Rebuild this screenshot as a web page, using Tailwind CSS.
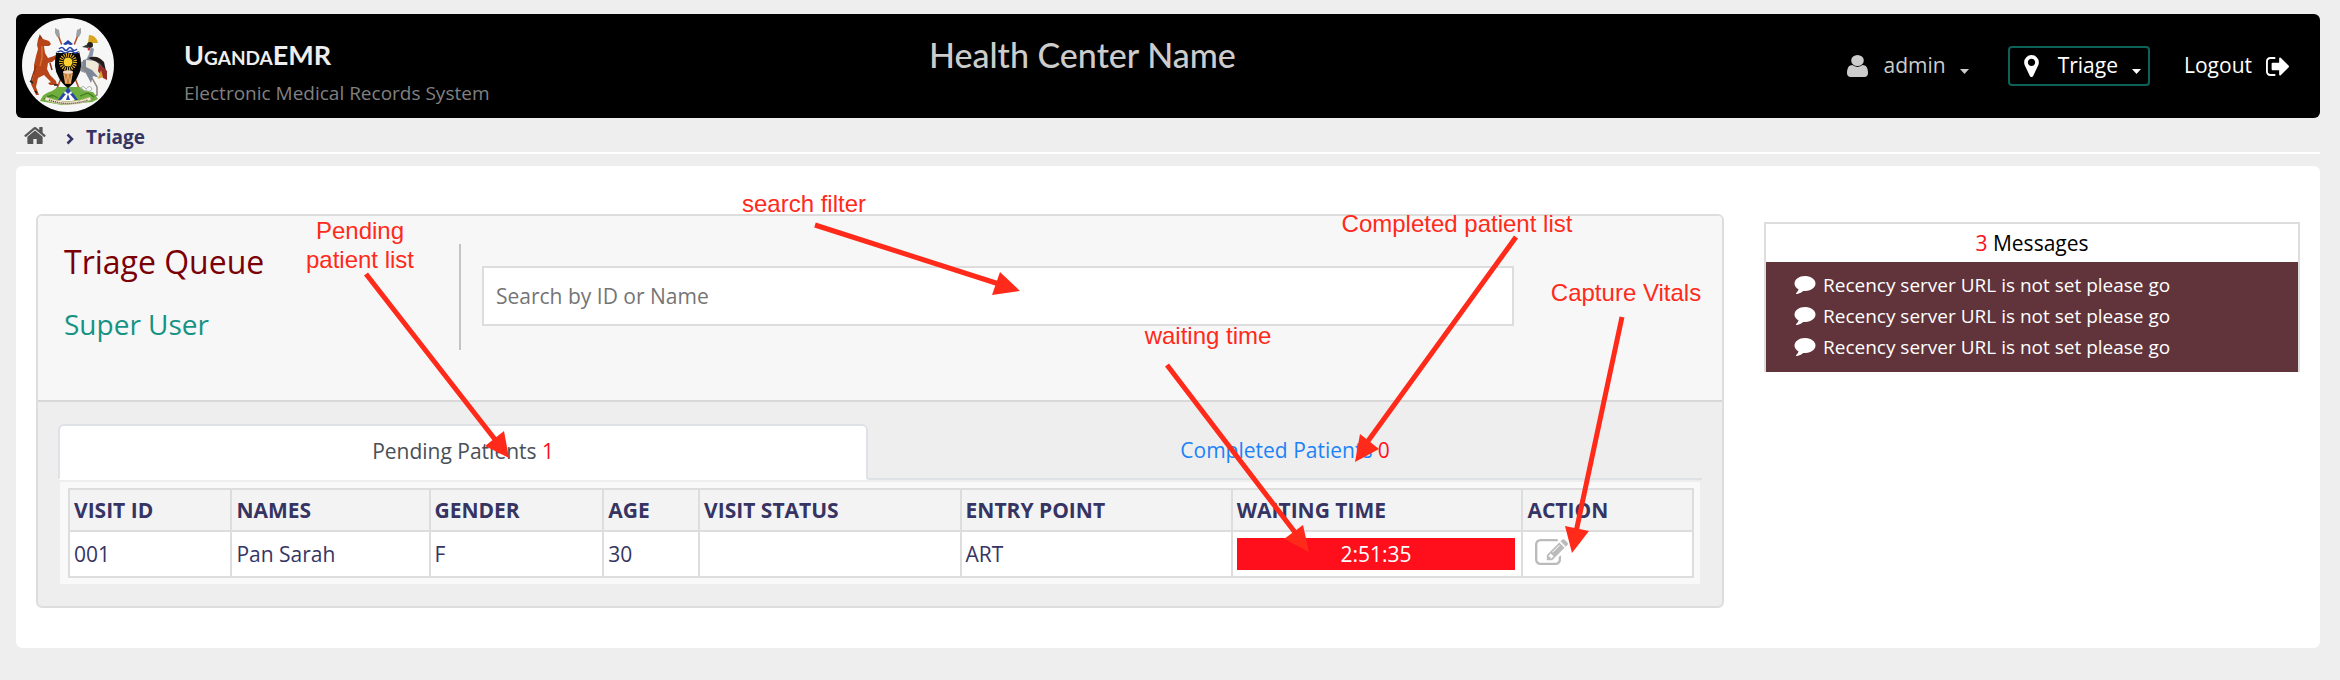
<!DOCTYPE html>
<html lang="en">
<head>
<meta charset="utf-8">
<title>UgandaEMR - Triage Queue</title>
<script src="https://cdn.jsdelivr.net/npm/@tailwindcss/browser@4"></script>
</head>
<body class="relative min-h-screen bg-[#eeeeee] pt-3.5 pl-4 pr-5 pb-8 font-['Open_Sans',sans-serif] text-[21px] text-[#363463]">

<svg class="hidden" aria-hidden="true">
  <symbol id="comment" viewBox="0 256 1792 1536"><path d="M1792 896q0 174-120 321.5t-326 233-450 85.5q-70 0-145-8-198 175-460 242-49 14-114 22-17 2-30.5-9t-17.5-29v-1q-3-4-.5-12t2-10 4.5-9.5l6-9 7-8.5 8-9q7-8 31-34.5t34.5-38 31-39.5 32.5-51 27-59 26-76q-157-89-247.5-220t-90.5-281q0-130 71-248.5t191-204.5 286-136.5 348-50.5q244 0 450 85.5t326 233 120 321.5z"/></symbol>
</svg>

<header class="grid h-[104px] grid-cols-[913fr_700fr_691fr] rounded-md bg-black">
  <div class="flex pl-1.5">
    <svg class="mt-1 h-[94px] w-[92px]" viewBox="0 0 92 94" role="img" aria-label="Coat of arms">
      <ellipse cx="46" cy="47" rx="46" ry="47" fill="#f6f6f6"/>
      <!-- spears -->
      <path d="M36 17l24 61M56 17L32 78" stroke="#b4512a" stroke-width="1.6"/>
      <path d="M33 10l4 2 1 6-3 1-2-4zM59 10l-4 2-1 6 3 1 2-4z" fill="#9aa0a3"/>
      <!-- mound -->
      <path d="M18 83q3-8 12-10l6-4h22l5 4 8 1 5 7-6 3-30 3z" fill="#6fae3c"/>
      <path d="M22 81l8-4 6 3M58 78l8-3 6 4M25 78l6 1" stroke="#3e7d24" stroke-width="1.2" fill="none"/>
      <path d="M58 71q3-5 6 0q4-5 6 0q-2 4-6 1q-4 3-6-1z" fill="none" stroke="#9aa69a" stroke-width=".8"/>
      <path d="M46 69l8 12-3 2 4 0H37l4-3-3 1z" fill="#fff"/>
      <path d="M46 69l3 4-3 3-3-3zM41 75l3 1-5 6h-3zM51 75l-3 1 5 6h3zM46 76l2 6h-4z" fill="#2846a8"/>
      <path d="M24 79q22 9 44 0l1 3q-23 9-46 0z" fill="#f3ead2" stroke="#c7b48b" stroke-width=".5"/>
      <path d="M27 82q19 7 39 0" fill="none" stroke="#60564a" stroke-width="1.4" stroke-dasharray="1.2 .8"/>
      <!-- kob -->
      <path d="M16 21q3-2 5 0l6 2 2 3-2 2-5 0 1 7 3 5 6-2 3-2 1 3-6 5-4 1-1 6 3 6 6 6 1 4-7 0-2-2 3-1-7-7-6 3-2 9 3 8-3 0-5-11 3-10 0-9 2-9 2-7-1-4z" fill="#b8441a"/>
      <path d="M17 21l1-3 2 3M14 48l-4 12-1 4M28 45l2 7" stroke="#8d3212" stroke-width="1.5" fill="none"/>
      <path d="M20 28l0 12-2 8" stroke="#dc7433" stroke-width="1.3" fill="none"/>
      <path d="M8 63l3 2M13 73l2 2M32 67h4M34 36l2-1" stroke="#222" stroke-width="1.6"/>
      <!-- crowned crane -->
      <path d="M66 25l1-8q7 0 9 8z" fill="#d9a520"/>
      <circle cx="68" cy="27" r="3" fill="#222"/>
      <path d="M66 26l-6 3 6 1z" fill="#333"/><circle cx="67" cy="31" r="1.5" fill="#cf2b2b"/>
      <path d="M69 29l3 2-2 10-6 7-1 7-5-2-2-8 8-3 3-6z" fill="#8c97a8"/>
      <path d="M61 42l14-3 7 7-4 14-7-2-2 7-8-15z" fill="#7d879a"/>
      <path d="M64 42l10 1 6 8-3 9-7-8-6-3z" fill="#eee8d8"/>
      <path d="M66 40q9-4 16 4l2 9-7-8z" fill="#241b1b"/>
      <path d="M77 46l8 7 0 9-4-2-5-7z" fill="#962b27"/><path d="M79 52l-3 9 5-2z" fill="#dca32a"/>
      <path d="M70 60l5 9 0 8-2 1M59 48l7 8" stroke="#90857a" stroke-width="1.5" fill="none"/>
      <!-- shield -->
      <path d="M35 33q-5 16 2 27 4 7 9 10 5-3 9-10 7-11 2-27z" fill="#050505"/>
      <path d="M35 35q2-8 7-10l4-3 4 3q5 2 7 10z" fill="#fff"/>
      <path d="M41 26l5-4 5 4q-2 2-5 0-3 2-5 0z" fill="#2846a8"/>
      <path d="M37 31q3-3 5 0t4 0 4 0 5 0M36 34q3-2 5 0t5 0 5 0 5 0" stroke="#2846a8" stroke-width="1.6" fill="none"/>
      <circle cx="46" cy="44" r="7" fill="none" stroke="#f5bd24" stroke-width="4" stroke-dasharray="1 1.2"/>
      <circle cx="46" cy="44" r="4.5" fill="#ffd02e"/>
      <path d="M41 54h10l-2 12h-6z" fill="#c97b36"/><ellipse cx="46" cy="54" rx="5" ry="1.8" fill="#f0dcc4"/>
      <path d="M42 56l2 9 2-9 2 9 2-9" stroke="#f0c898" stroke-width=".7" fill="none"/>
    </svg>
    <div class="ml-[70px] pt-[23px]">
      <div class="font-['Trebuchet_MS',Lato,sans-serif] text-[27px] leading-9 font-bold text-[#eeeeee] [font-variant:small-caps]">UgandaEMR</div>
      <div class="mt-1.5 text-[19px] leading-7 text-[#808080]">Electronic Medical Records System</div>
    </div>
  </div>
  <h1 class="pt-[21px] font-['Trebuchet_MS',Lato,sans-serif] text-[34px] leading-10 font-medium text-[#cccccc]">Health Center Name</h1>
  <nav class="flex items-center justify-end pr-[31px] text-white">
    <button class="flex items-center text-[#cccccc]">
      <svg class="h-[22px] w-[21px] fill-current" viewBox="256 128 1280 1536" preserveAspectRatio="none"><path d="M1536 1399q0 109-62.500 187t-150.500 78h-854q-88 0-150.500-78t-62.500-187q0-85 8.500-160.500t31.500-152 58.500-131 94-89 134.500-34.500q131 128 313 128t313-128q76 0 134.500 34.500t94 89 58.500 131 31.500 152 8.500 160.500zm-256-887q0 159-112.500 271.500t-271.500 112.500-271.500-112.500-112.500-271.500 112.500-271.500 271.500-112.500 271.500 112.500 112.500 271.500z"/></svg>
      <span class="ml-4">admin</span>
      <svg class="mt-2.5 ml-3.5 h-[5px] w-[9px] fill-current" viewBox="0 0 9 5"><path d="M0 0h9L4.500 5z"/></svg>
    </button>
    <button class="ml-[39px] flex h-10 items-center rounded-sm border-2 border-[#0c6258] pl-3.5 pr-[7px]">
      <svg class="h-[22px] w-[15px] fill-current" viewBox="384 128 1024 1536"><path d="M1152 640q0-106-75-181t-181-75-181 75-75 181 75 181 181 75 181-75 75-181zm256 0q0 109-33 179l-364 774q-16 33-47.500 52t-67.500 19-67.500-19-46.500-52l-365-774q-33-70-33-179 0-212 150-362t362-150 362 150 150 362z"/></svg>
      <span class="ml-[19px]">Triage</span>
      <svg class="mt-2.5 ml-3.5 h-[5px] w-[9px] fill-current" viewBox="0 0 9 5"><path d="M0 0h9L4.500 5z"/></svg>
    </button>
    <a href="#" class="ml-[34px] flex items-center">Logout
      <svg class="ml-3.5 h-[19px] w-[23px] fill-current" viewBox="64 256 1568 1280"><path d="M704 1440q0 4 1 20t.5 26.500-3 23.500-10 19.500-20.500 6.500h-320q-119 0-203.500-84.500t-84.500-203.500v-704q0-119 84.500-203.500t203.500-84.500h320q13 0 22.500 9.500t9.500 22.500q0 4 1 20t.5 26.500-3 23.500-10 19.500-20.500 6.500h-320q-66 0-113 47t-47 113v704q0 66 47 113t113 47h312l11.500 1 11.500 3 8 5.500 7 9 2 13.500zm928-544q0 26-19 45l-544 544q-19 19-45 19t-45-19-19-45v-288h-448q-26 0-45-19t-19-45v-384q0-26 19-45t45-19h448v-288q0-26 19-45t45-19 45 19l544 544q19 19 19 45z"/></svg>
    </a>
  </nav>
</header>

<nav class="flex h-9 items-center border-b-2 border-white pt-1 pl-2 text-[19px] font-bold" aria-label="Breadcrumb">
  <a href="#" aria-label="Home" class="pb-1"><svg class="h-[17px] w-[22px] fill-[#555555]" viewBox="24 253 1616 1283"><path d="M1408 992v480q0 26-19 45t-45 19h-384v-384h-256v384h-384q-26 0-45-19t-19-45v-480q0-1 .5-3t.5-3l575-474 575 474q1 2 1 6zm223-69l-62 74q-8 9-21 11h-3q-13 0-21-7l-692-577-692 577q-12 8-24 7-13-2-21-11l-62-74q-8-10-7-23.500t11-21.500l719-599q32-26 76-26t76 26l244 204v-195q0-14 9-23t23-9h192q14 0 23 9t9 23v408l219 182q10 8 11 21.500t-7 23.500z"/></svg></a>
  <svg class="mt-1 ml-5 h-3 w-2 fill-none stroke-[#363463] stroke-[2.500]" viewBox="0 0 8 12"><path d="M1.500 1.500L6 6l-4.500 4.500"/></svg>
  <span class="ml-3">Triage</span>
</nav>

<main class="mt-3 flex items-start rounded-md bg-white pt-12 pb-10">
  <section class="w-3/4 px-5">
    <div class="overflow-hidden rounded-md border-2 border-[#dddddd] bg-[#eeeeee]">
      <div class="flex h-[186px] border-b-2 border-[#d8d8d8] bg-[#f7f7f7]">
        <div class="w-1/4 pt-[26px] pl-[26px]">
          <h2 class="text-[32px] leading-10 text-[#7a0006]">Triage Queue</h2>
          <div class="mt-6 text-[28px] leading-9 text-[#169384]">Super User</div>
        </div>
        <div class="mt-7 h-[106px] w-0.5 bg-[#c4c4c4]"></div>
        <div class="flex-1 pt-[50px] pr-52 pl-[21px]">
          <input type="text" aria-label="Search patients" placeholder="Search by ID or Name" class="h-[60px] w-full border-2 border-[#dddddd] bg-white px-3 placeholder:text-[#757575]">
        </div>
      </div>
      <div class="px-5 py-[22px]">
        <div role="tablist" class="flex border-b-2 border-[#dee2e6]">
          <button role="tab" aria-selected="true" class="-mb-0.5 h-14 flex-auto rounded-t-md border-2 border-[#dee2e6] border-b-white bg-white text-[#495057]">Pending Patients <span class="text-[#ff0e1c]">1</span></button>
          <button role="tab" aria-selected="false" class="flex-auto text-[#1c82f8]">Completed Patients <span class="text-[#ff0e1c]">0</span></button>
        </div>
        <div class="mx-0.5 mt-0.5 bg-[#f9f9f9] py-1.5 pr-1.5 pl-2">
          <table class="w-full table-fixed border-collapse text-left">
            <colgroup><col class="w-[10%]"><col class="w-[12.200%]"><col class="w-[10.700%]"><col class="w-[5.900%]"><col class="w-[16.100%]"><col class="w-[16.700%]"><col class="w-[17.900%]"><col></colgroup>
            <thead>
              <tr class="h-[42px] bg-[#f3f3f3] leading-8 [&>th]:border-2 [&>th]:border-[#dddddd] [&>th]:px-1 [&>th]:font-bold">
                <th>VISIT ID</th><th>NAMES</th><th>GENDER</th><th>AGE</th><th>VISIT STATUS</th><th>ENTRY POINT</th><th>WAITING TIME</th><th>ACTION</th>
              </tr>
            </thead>
            <tbody>
              <tr class="h-[46px] bg-white leading-8 [&>td]:border-2 [&>td]:border-[#dddddd] [&>td]:px-1">
                <td>001</td><td>Pan Sarah</td><td>F</td><td>30</td><td></td><td>ART</td>
                <td><div class="mr-0.5 bg-[#ff0e1c] text-center text-white">2:51:35</div></td>
                <td><button class="ml-2 block pb-1" aria-label="Capture vitals"><svg class="h-[26px] w-[33px] fill-[#bbbbbb]" viewBox="0 128 1784 1408"><path d="M888 1184l116-116-152-152-116 116v56h96v96h56zm440-720q-16-16-33 1l-350 350q-17 17-1 33t33-1l350-350q17-17 1-33zm80 594v190q0 119-84.500 203.500t-203.500 84.500h-832q-119 0-203.500-84.500t-84.500-203.500v-832q0-119 84.500-203.500t203.500-84.500h832q63 0 117 25 15 7 18 23 3 17-9 29l-49 49q-14 14-32 8-23-6-45-6h-832q-66 0-113 47t-47 113v832q0 66 47 113t113 47h832q66 0 113-47t47-113v-126q0-13 9-22l64-64q15-15 35-7t20 29zm-96-738l288 288-672 672h-288v-288zm444 132l-92 92-288-288 92-92q28-28 68-28t68 28l152 152q28 28 28 68t-28 68z"/></svg></button></td>
              </tr>
            </tbody>
          </table>
        </div>
      </div>
    </div>
  </section>
  <aside class="w-1/4 px-5 pt-2">
    <div class="border-2 border-b-0 border-[#dddddd]">
      <div class="h-[38px] text-center leading-[38px] text-black"><span class="text-[#ff0e1c]">3</span> Messages</div>
      <ul class="flex h-[110px] flex-col gap-px bg-[#61343b] pt-2 pl-7 text-[19px] leading-[30px] text-white">
        <li class="flex items-center gap-[7px]"><svg class="h-[18px] w-[22px] fill-white"><use href="#comment"/></svg>Recency server URL is not set please go</li>
        <li class="flex items-center gap-[7px]"><svg class="h-[18px] w-[22px] fill-white"><use href="#comment"/></svg>Recency server URL is not set please go</li>
        <li class="flex items-center gap-[7px]"><svg class="h-[18px] w-[22px] fill-white"><use href="#comment"/></svg>Recency server URL is not set please go</li>
      </ul>
    </div>
  </aside>
</main>

<!-- Callouts drawn over the page -->
<svg class="pointer-events-none absolute top-0 left-0 h-[680px] w-[2340px] fill-[#ff2a1a] font-['Liberation_Sans',Arial,sans-serif] text-[24px]" viewBox="0 0 2340 680">
  <g stroke="#ff2a1a" stroke-width="5">
    <path d="M366 274L497 442M815 225L999 284M1516 237L1368 441M1167 365L1297 535M1622 317L1576 532"/>
  </g>
  <path d="M509 458L485 446L504 431zM1020 291L992 295L1000 272zM1355 462L1360 434L1379 449zM1309 552L1284 539L1303 525zM1572 553L1565 526L1589 531z"/>
  <g text-anchor="middle">
    <text x="360" y="239">Pending</text>
    <text x="360" y="268">patient list</text>
    <text x="804" y="212">search filter</text>
    <text x="1457" y="232">Completed patient list</text>
    <text x="1626" y="301">Capture Vitals</text>
    <text x="1208" y="344">waiting time</text>
  </g>
</svg>
</body>
</html>
